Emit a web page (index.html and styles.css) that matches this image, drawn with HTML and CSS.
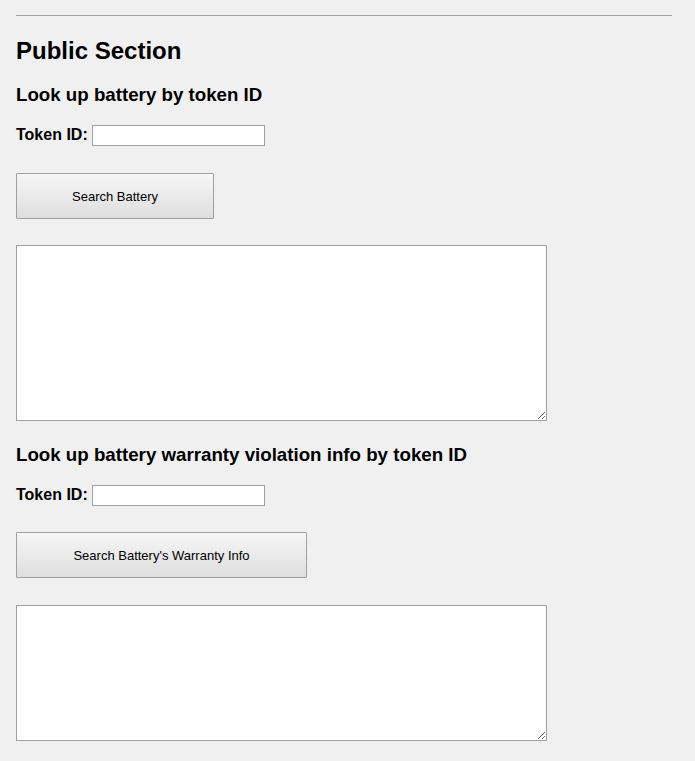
FILE: index.html
```html
<!DOCTYPE html>
<html>
<head>
<meta charset="utf-8">
<link rel="stylesheet" href="styles.css">
</head>
<body>
<div class="page">
  <div class="rule"></div>
  <h2 class="section-title">Public Section</h2>

  <h3 class="sub-title first">Look up battery by token ID</h3>
  <div class="field-row">
    <label class="field-label" for="t1">Token ID:</label>
    <input class="field-input" id="t1" type="text">
  </div>
  <button class="action-btn btn-one">Search Battery</button>
  <textarea class="result-box box-one"></textarea>

  <h3 class="sub-title second">Look up battery warranty violation info by token ID</h3>
  <div class="field-row">
    <label class="field-label" for="t2">Token ID:</label>
    <input class="field-input" id="t2" type="text">
  </div>
  <button class="action-btn btn-two">Search Battery's Warranty Info</button>
  <textarea class="result-box box-two"></textarea>
</div>
</body>
</html>
```

FILE: styles.css
```css
html, body {
  margin: 0;
  padding: 0;
  background: #f0f0f0;
}
body {
  font-family: "Liberation Sans", Arial, sans-serif;
  color: #000;
}
.page {
  display: flex;
  flex-direction: column;
  align-items: flex-start;
  padding: 15px 16px 0 16px;
}
.rule {
  width: 656px;
  height: 1px;
  background: #a0a0a0;
}
.section-title {
  margin: 21px 0 0 0;
  font-size: 24px;
  line-height: 28px;
  font-weight: bold;
}
.sub-title {
  margin: 0;
  font-size: 18.72px;
  line-height: 22px;
  font-weight: bold;
}
.sub-title.first { margin-top: 19px; }
.sub-title.second { margin-top: 23px; }
.field-row {
  display: flex;
  align-items: center;
  gap: 4px;
  margin-top: 19px;
  height: 21px;
}
.field-label {
  font-size: 16px;
  font-weight: bold;
  line-height: 18px;
  padding-bottom: 2px;
}
.field-input {
  box-sizing: border-box;
  width: 173px;
  height: 21px;
  margin: 0;
  padding: 1px 2px;
  border: 1px solid #a0a0a0;
  background: #fff;
  font-family: "Liberation Sans", Arial, sans-serif;
  font-size: 13px;
}
.action-btn {
  box-sizing: border-box;
  height: 46px;
  margin: 27px 0 0 0;
  padding: 0;
  border: 1px solid #a0a0a0;
  border-radius: 1px;
  background: linear-gradient(to bottom, #f6f6f6, #dedede);
  font-family: "Liberation Sans", Arial, sans-serif;
  font-size: 13px;
  color: #000;
}
.btn-one { width: 198px; }
.btn-two { width: 291px; margin-top: 26px; }
.result-box {
  display: block;
  box-sizing: border-box;
  width: 531px;
  margin: 26px 0 0 0;
  padding: 2px;
  border: 1px solid #a0a0a0;
  background: #fff;
  resize: both;
  font-family: "Liberation Mono", monospace;
  font-size: 13px;
}
.box-one { height: 176px; }
.box-two { height: 136px; margin-top: 27px; }
```
